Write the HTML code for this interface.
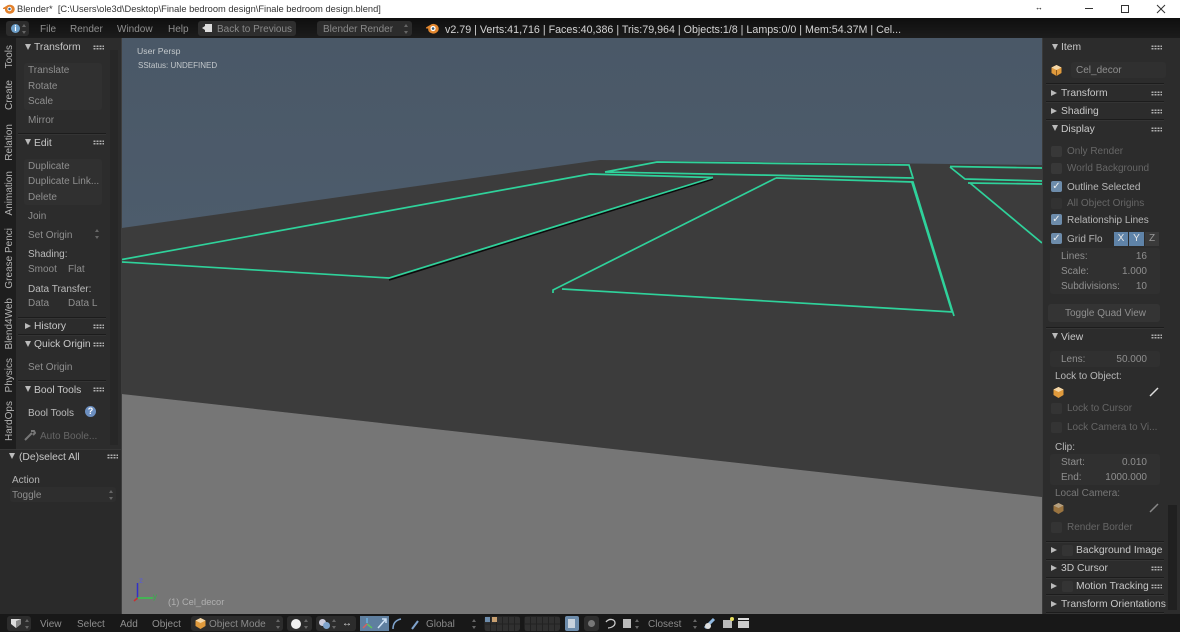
<!DOCTYPE html>
<html><head><meta charset="utf-8"><style>
html,body{margin:0;padding:0;background:#2b2b2b}
#r{position:relative;width:1180px;height:632px;overflow:hidden;font-family:"Liberation Sans","DejaVu Sans",sans-serif;font-size:10px;color:#a6a6a6;filter:blur(.35px)}
#r div{position:absolute}
.t{white-space:pre;line-height:12px;margin-top:1px}
.b{color:#cfcfcf}.h{color:#c8c8c8;font-size:10.3px}
.d{color:#666}.m{color:#8f8f8f}.mm{color:#8a8a8a}
.f{background:#343434;border-radius:3px}
.v{writing-mode:vertical-rl;transform:rotate(180deg);white-space:pre;line-height:12px;color:#b4b4b4;font-size:10px}
.g{width:11px;height:5px;background-image:radial-gradient(#b0b0b0 45%,transparent 50%);background-size:3px 2.5px}
.ad{width:0;height:0;border-left:3px solid transparent;border-right:3px solid transparent;border-top:6px solid #bbb}
.ar{width:0;height:0;border-top:3px solid transparent;border-bottom:3px solid transparent;border-left:6px solid #bbb}
.s{height:1px;background:#1c1c1c;box-shadow:0 1px 0 #343434}
.c{width:11px;height:11px;border-radius:2px;background:#383838}
.ck{width:11px;height:11px;border-radius:2px;background:#6d8cab;color:#eee;font-size:10px;line-height:11px;text-align:center}
.sp{width:5px;height:10px}
.sp:before,.sp:after{content:"";position:absolute;left:0;border-left:2.5px solid transparent;border-right:2.5px solid transparent}
.sp:before{top:0;border-bottom:3.500px solid #666}
.sp:after{bottom:0;border-top:3.500px solid #666}
.n{right:33px}
.grid{background-image:linear-gradient(90deg,#222 1px,transparent 1px),linear-gradient(#222 1px,transparent 1px);background-size:6px 7.500px}
svg{position:absolute}
</style></head><body><div id="r">

<div style="left:0;top:0;width:1180px;height:18px;background:#fff"></div>
<svg style="left:2px;top:3px" width="13" height="12" viewBox="0 0 13 12"><path d="M1 5L6 2a5 4.500 0 1 1-1 8A4 4 0 0 1 3 6L1 6z" fill="#e2812c"/><circle cx="7.500" cy="6" r="2.200" fill="#fff"/><circle cx="7.500" cy="6" r="1.200" fill="#2c5f94"/></svg>
<div class="t" style="left:17px;top:2px;font-size:9.300px;color:#333">Blender*  [C:\Users\ole3d\Desktop\Finale bedroom design\Finale bedroom design.blend]</div>
<div class="t" style="left:1035px;top:1px;color:#111;font-size:8px;font-weight:bold">↔</div>
<div style="left:1085px;top:8px;width:8px;height:1px;background:#333"></div>
<div style="left:1121px;top:5px;width:6px;height:6px;border:1px solid #333"></div>
<svg style="left:1156px;top:4px" width="10" height="10"><path d="M1 1L9 9M9 1L1 9" stroke="#333" stroke-width="1"/></svg>

<div style="left:0;top:18px;width:1180px;height:20px;background:linear-gradient(#0f0f0f,#1c1c1c)"></div>
<div class="f" style="left:6px;top:21px;width:23px;height:15px;background:#2c2c2c"></div>
<div style="left:11px;top:24px;width:9px;height:9px;border-radius:50%;background:#6d9fc9;color:#fff;font-size:8px;line-height:9px;text-align:center;font-weight:bold">i</div>
<div class="sp" style="left:22px;top:24px"></div>
<div class="t m" style="left:40px;top:23px">File</div>
<div class="t m" style="left:70px;top:23px">Render</div>
<div class="t m" style="left:117px;top:23px">Window</div>
<div class="t m" style="left:168px;top:23px">Help</div>
<div class="f" style="left:198px;top:21px;width:98px;height:15px;background:#2e2e2e"></div>
<svg style="left:201px;top:23px" width="12" height="11"><path d="M4 1H11V9H4V7L1 5L4 3z" fill="#ddd"/></svg>
<div class="t mm" style="left:217px;top:23px">Back to Previous</div>
<div class="f" style="left:317px;top:21px;width:95px;height:15px;background:#2c2c2c"></div>
<div class="t mm" style="left:323px;top:23px">Blender Render</div>
<div class="sp" style="left:404px;top:24px"></div>
<svg style="left:425px;top:22px" width="14" height="13" viewBox="0 0 13 12"><path d="M1 5L6 2a5 4.500 0 1 1-1 8A4 4 0 0 1 3 6L1 6z" fill="#e2872f"/><circle cx="7.500" cy="6" r="2.400" fill="#fff"/><circle cx="7.500" cy="6" r="1.200" fill="#33566f"/></svg>
<div class="t" style="left:445px;top:23px;color:#d4d4d4;font-size:10.700px">v2.79 | Verts:41,716 | Faces:40,386 | Tris:79,964 | Objects:1/8 | Lamps:0/0 | Mem:54.37M | Cel...</div>

<svg style="left:122px;top:38px" width="920" height="576" viewBox="122 38 920 576">
<defs><linearGradient id="sky" x1="0" y1="0" x2="0" y2="1"><stop offset="0" stop-color="#4a5867"/><stop offset="1" stop-color="#4d5c6c"/></linearGradient></defs>
<rect x="122" y="38" width="920" height="200" fill="url(#sky)"/>
<polygon points="122,228 600,160 1042,165 1042,497 122,394" fill="#3c3c3c"/>
<polygon points="122,394 1042,497 1042,614 122,614" fill="#767676"/>
<path d="M389,280L713,179" stroke="#0b0b0b" stroke-width="1.500" fill="none"/>
<g fill="none" stroke="#2fd29b" stroke-width="1.700">
<path d="M122,259.500L590,174L713,177.500"/>
<path d="M122,262L389,278L713,177.500"/>
<path d="M605,172L657,162L909,165L913,178L605,172"/>
<path d="M776,178L913,182L954,316"/>
<path d="M911.500,181L952,312"/>
<path d="M776,178L553,290L553,293"/>
<path d="M562,289L953,312"/>
<path d="M950,166.500L1042,168"/>
<path d="M950,167L965,179L1042,181"/>
<path d="M968,183L1042,184"/>
<path d="M970,183L1042,243"/>
</g>
<path d="M137.500,583V598" stroke="#3030c8" stroke-width="1.500"/>
<path d="M137.500,598H153" stroke="#35c84a" stroke-width="1.500"/>
<path d="M137.500,598L134,601" stroke="#c83030" stroke-width="1.500"/>
</svg>
<div class="t" style="left:139px;top:574px;font-size:8px;color:#5b5bd0">z</div>
<div class="t" style="left:153px;top:590px;font-size:8px;color:#35b04a">y</div>
<div class="t" style="left:168px;top:595px;font-size:9.300px;color:#b0b0b0">(1) Cel_decor</div>
<div class="t" style="left:137px;top:44px;font-size:8.700px;color:#c3c8cc">User Persp</div>
<div class="t" style="left:138px;top:59px;font-size:8px;color:#c3c8cc">SStatus: UNDEFINED</div>

<!-- left -->
<div style="left:0;top:38px;width:122px;height:576px;background:#2c2c2c"></div>
<div style="left:0;top:38px;width:16px;height:411px;background:#1e1e1e"></div>
<div class="v" style="left:4px;top:45px">Tools</div>
<div class="v" style="left:4px;top:80px">Create</div>
<div class="v" style="left:4px;top:124px">Relation</div>
<div class="v" style="left:4px;top:171px">Animation</div>
<div class="v" style="left:4px;top:228px">Grease Penci</div>
<div class="v" style="left:4px;top:298px">Blend4Web</div>
<div class="v" style="left:4px;top:358px">Physics</div>
<div class="v" style="left:4px;top:401px">HardOps</div>
<div style="left:110px;top:50px;width:8px;height:395px;background:#272727"></div>

<div class="ad" style="left:25px;top:44px"></div><div class="t h" style="left:34px;top:41px">Transform</div><div class="g" style="left:93px;top:45px"></div>
<div class="f" style="left:24px;top:63px;width:78px;height:47px;background:#303030"></div>
<div class="t m" style="left:28px;top:64px">Translate</div>
<div class="t m" style="left:28px;top:80px">Rotate</div>
<div class="t m" style="left:28px;top:95px">Scale</div>
<div class="t m" style="left:28px;top:114px">Mirror</div>
<div class="s" style="left:18px;top:133px;width:88px"></div>
<div class="ad" style="left:25px;top:139px"></div><div class="t h" style="left:34px;top:137px">Edit</div><div class="g" style="left:93px;top:140px"></div>
<div class="f" style="left:24px;top:159px;width:78px;height:46px;background:#303030"></div>
<div class="t m" style="left:28px;top:160px">Duplicate</div>
<div class="t m" style="left:28px;top:175px">Duplicate Link...</div>
<div class="t m" style="left:28px;top:191px">Delete</div>
<div class="t m" style="left:28px;top:210px">Join</div>
<div class="t m" style="left:28px;top:229px">Set Origin</div>
<div class="sp" style="left:95px;top:229px"></div>
<div class="t" style="left:28px;top:248px;color:#bbb">Shading:</div>
<div class="t m" style="left:28px;top:263px">Smoot</div><div class="t m" style="left:68px;top:263px">Flat</div>
<div class="t" style="left:28px;top:283px;color:#bbb">Data Transfer:</div>
<div class="t m" style="left:28px;top:297px">Data</div><div class="t m" style="left:68px;top:297px">Data L</div>
<div class="s" style="left:18px;top:317px;width:88px"></div>
<div class="ar" style="left:25px;top:323px"></div><div class="t h" style="left:34px;top:320px">History</div><div class="g" style="left:93px;top:324px"></div>
<div class="s" style="left:18px;top:334px;width:88px"></div>
<div class="ad" style="left:25px;top:341px"></div><div class="t h" style="left:34px;top:338px">Quick Origin</div><div class="g" style="left:93px;top:342px"></div>
<div class="t m" style="left:28px;top:361px">Set Origin</div>
<div class="s" style="left:18px;top:380px;width:88px"></div>
<div class="ad" style="left:25px;top:386px"></div><div class="t h" style="left:34px;top:384px">Bool Tools</div><div class="g" style="left:93px;top:387px"></div>
<div class="t" style="left:28px;top:407px;color:#bbb">Bool Tools</div>
<div style="left:85px;top:406px;width:11px;height:11px;border-radius:50%;background:#6c8fc0;color:#fff;font-size:9px;line-height:11px;text-align:center;font-weight:bold">?</div>
<svg style="left:24px;top:429px" width="12" height="12"><path d="M1 11L8 4M7 2l3 0l1 2l-2 2" stroke="#777" stroke-width="2" fill="none"/></svg>
<div class="t" style="left:40px;top:430px;color:#666">Auto Boole...</div>

<div style="left:0;top:449px;width:122px;height:165px;background:#2a2a2a;border-top:1px solid #363636"></div>
<div class="ad" style="left:9px;top:453px"></div><div class="t h" style="left:19px;top:451px">(De)select All</div><div class="g" style="left:107px;top:454px"></div>
<div class="t" style="left:12px;top:474px;color:#b5b5b5">Action</div>
<div class="f" style="left:10px;top:487px;width:106px;height:15px;background:#2e2e2e"></div>
<div class="t m" style="left:12px;top:489px">Toggle</div>
<div class="sp" style="left:109px;top:490px"></div>
<div style="left:121px;top:38px;width:1px;height:576px;background:#3d3d3d"></div>

<!-- right -->
<div style="left:1042px;top:38px;width:138px;height:576px;background:#2c2c2c"></div>
<div style="left:1168px;top:505px;width:9px;height:105px;background:#202020"></div>
<div class="ad" style="left:1052px;top:44px"></div><div class="t h" style="left:1061px;top:41px">Item</div><div class="g" style="left:1151px;top:45px"></div>
<svg style="left:1051px;top:65px" width="11" height="11"><path d="M5.500 0L10.500 2.500V8L5.500 11L.5 8V2.500z" fill="#e09a3c"/><path d="M5.500 5L10.500 2.500L5.500 0L.5 2.500z" fill="#f4d7a8"/><path d="M5.500 5V11" stroke="#8a5a20"/></svg>
<div class="f" style="left:1071px;top:62px;width:95px;height:16px;background:#303030"></div>
<div class="t m" style="left:1076px;top:64px">Cel_decor</div>
<div class="s" style="left:1046px;top:83px;width:118px"></div>
<div class="ar" style="left:1051px;top:90px"></div><div class="t h" style="left:1061px;top:87px">Transform</div><div class="g" style="left:1151px;top:91px"></div>
<div class="s" style="left:1046px;top:101px;width:118px"></div>
<div class="ar" style="left:1051px;top:108px"></div><div class="t h" style="left:1061px;top:105px">Shading</div><div class="g" style="left:1151px;top:109px"></div>
<div class="s" style="left:1046px;top:119px;width:118px"></div>
<div class="ad" style="left:1052px;top:125px"></div><div class="t h" style="left:1061px;top:123px">Display</div><div class="g" style="left:1151px;top:127px"></div>
<div class="c" style="left:1051px;top:146px"></div><div class="t d" style="left:1067px;top:145px">Only Render</div>
<div class="c" style="left:1051px;top:163px"></div><div class="t d" style="left:1067px;top:162px">World Background</div>
<div class="ck" style="left:1051px;top:181px">✓</div><div class="t" style="left:1067px;top:181px;color:#b8b8b8">Outline Selected</div>
<div class="c" style="left:1051px;top:198px;background:#323232"></div><div class="t d" style="left:1067px;top:197px">All Object Origins</div>
<div class="ck" style="left:1051px;top:214px">✓</div><div class="t" style="left:1067px;top:214px;color:#b8b8b8">Relationship Lines</div>
<div class="ck" style="left:1051px;top:233px">✓</div><div class="t" style="left:1067px;top:233px;color:#b8b8b8">Grid Flo</div>
<div style="left:1114px;top:232px;width:14px;height:14px;background:#5f83a8;color:#e6e6e6;text-align:center;line-height:14px">X</div>
<div style="left:1129px;top:232px;width:15px;height:14px;background:#5f83a8;color:#e6e6e6;text-align:center;line-height:14px">Y</div>
<div style="left:1145px;top:232px;width:14px;height:14px;background:#3a3a3a;color:#999;text-align:center;line-height:14px">Z</div>
<div class="f" style="left:1050px;top:248px;width:110px;height:46px;background:#303030"></div>
<div class="t m" style="left:1061px;top:250px">Lines:</div><div class="t m n" style="top:250px">16</div>
<div class="t m" style="left:1061px;top:265px">Scale:</div><div class="t m n" style="top:265px">1.000</div>
<div class="t m" style="left:1061px;top:280px">Subdivisions:</div><div class="t m n" style="top:280px">10</div>
<div class="f" style="left:1048px;top:304px;width:112px;height:18px;background:#343434"></div>
<div class="t m" style="left:1065px;top:307px">Toggle Quad View</div>
<div class="s" style="left:1046px;top:327px;width:118px"></div>
<div class="ad" style="left:1052px;top:333px"></div><div class="t h" style="left:1061px;top:331px">View</div><div class="g" style="left:1151px;top:334px"></div>
<div class="f" style="left:1050px;top:351px;width:110px;height:16px;background:#303030"></div>
<div class="t m" style="left:1061px;top:353px">Lens:</div><div class="t m n" style="top:353px">50.000</div>
<div class="t" style="left:1055px;top:370px;color:#b8b8b8">Lock to Object:</div>
<svg style="left:1053px;top:387px" width="11" height="11"><path d="M5.500 0L10.500 2.500V8L5.500 11L.5 8V2.500z" fill="#e09a3c"/><path d="M5.500 5L10.500 2.500L5.500 0L.5 2.500z" fill="#f4d7a8"/></svg>
<svg style="left:1149px;top:386px" width="10" height="12"><path d="M1 10L9 2" stroke="#ddd" stroke-width="1.500"/></svg>
<div class="c" style="left:1051px;top:403px;background:#343434"></div><div class="t d" style="left:1067px;top:402px">Lock to Cursor</div>
<div class="c" style="left:1051px;top:422px;background:#343434"></div><div class="t d" style="left:1067px;top:421px">Lock Camera to Vi...</div>
<div class="t" style="left:1055px;top:441px;color:#b8b8b8">Clip:</div>
<div class="f" style="left:1050px;top:454px;width:110px;height:31px;background:#303030"></div>
<div class="t m" style="left:1061px;top:456px">Start:</div><div class="t m n" style="top:456px">0.010</div>
<div class="t m" style="left:1061px;top:471px">End:</div><div class="t m n" style="top:471px">1000.000</div>
<div class="t" style="left:1055px;top:487px;color:#777">Local Camera:</div>
<svg style="left:1053px;top:503px" width="11" height="11"><path d="M5.500 0L10.500 2.500V8L5.500 11L.5 8V2.500z" fill="#9a7440"/><path d="M5.500 5L10.500 2.500L5.500 0L.5 2.500z" fill="#b5a080"/></svg>
<svg style="left:1149px;top:502px" width="10" height="12"><path d="M1 10L9 2" stroke="#888" stroke-width="1.500"/></svg>
<div class="c" style="left:1051px;top:522px;background:#343434"></div><div class="t d" style="left:1067px;top:521px">Render Border</div>
<div class="s" style="left:1046px;top:541px;width:118px"></div>
<div class="ar" style="left:1051px;top:547px"></div><div class="c" style="left:1062px;top:545px;background:#343434"></div><div class="t h" style="left:1076px;top:544px">Background Image</div>
<div class="s" style="left:1046px;top:559px;width:118px"></div>
<div class="ar" style="left:1051px;top:565px"></div><div class="t h" style="left:1061px;top:562px">3D Cursor</div><div class="g" style="left:1151px;top:566px"></div>
<div class="s" style="left:1046px;top:577px;width:118px"></div>
<div class="ar" style="left:1051px;top:583px"></div><div class="c" style="left:1062px;top:581px;background:#343434"></div><div class="t h" style="left:1076px;top:580px">Motion Tracking</div><div class="g" style="left:1151px;top:584px"></div>
<div class="s" style="left:1046px;top:594px;width:118px"></div>
<div class="ar" style="left:1051px;top:601px"></div><div class="t h" style="left:1061px;top:598px">Transform Orientations</div>
<div class="s" style="left:1046px;top:612px;width:118px"></div>
<div style="left:1042px;top:38px;width:1px;height:576px;background:#3a3a3a"></div>

<!-- bottom -->
<div style="left:0;top:614px;width:1180px;height:18px;background:#181818"></div>
<div class="f" style="left:7px;top:616px;width:24px;height:15px;background:#2c2c2c"></div>
<svg style="left:10px;top:618px" width="12" height="11"><path d="M1 1H11V6L6 10L1 6z" fill="#ddd"/><path d="M6 3V10L11 6V1z" fill="#888"/></svg>
<div class="sp" style="left:25px;top:619px"></div>
<div class="t m" style="left:40px;top:618px">View</div>
<div class="t m" style="left:77px;top:618px">Select</div>
<div class="t m" style="left:120px;top:618px">Add</div>
<div class="t m" style="left:152px;top:618px">Object</div>
<div class="f" style="left:191px;top:616px;width:92px;height:15px;background:#2c2c2c"></div>
<svg style="left:195px;top:618px" width="11" height="11"><path d="M5.500 0L10.500 2.500V8L5.500 11L.5 8V2.500z" fill="#e09a3c"/><path d="M5.500 5L10.500 2.500L5.500 0L.5 2.500z" fill="#f4d7a8"/></svg>
<div class="t mm" style="left:209px;top:618px">Object Mode</div>
<div class="sp" style="left:276px;top:619px"></div>
<div class="f" style="left:287px;top:616px;width:25px;height:15px;background:#2c2c2c"></div>
<div style="left:291px;top:619px;width:10px;height:10px;border-radius:50%;background:#eee"></div>
<div class="sp" style="left:304px;top:619px"></div>
<div class="f" style="left:316px;top:616px;width:40px;height:15px;background:#2c2c2c"></div>
<div style="left:319px;top:619px;width:7px;height:7px;border-radius:50%;background:#ccd"></div>
<div style="left:323px;top:622px;width:7px;height:7px;border-radius:50%;background:#7fa3cc"></div>
<div class="sp" style="left:332px;top:619px"></div>
<div class="t" style="left:342px;top:617px;color:#ddd;font-size:10px">↔</div>
<div style="left:360px;top:616px;width:15px;height:15px;background:#5f7f9f"></div>
<div style="left:375px;top:616px;width:14px;height:15px;background:#5f7f9f"></div>
<svg style="left:360px;top:616px" width="60" height="15"><path d="M7 7V2" stroke="#6bb0e0" stroke-width="1.500"/><path d="M7 8L12 12" stroke="#5fc45f" stroke-width="1.500"/><path d="M7 8L3 12" stroke="#d86060" stroke-width="1.500"/><path d="M18 12L26 3M22 3h4v4" stroke="#cfe2f5" stroke-width="1.500" fill="none"/><path d="M33 13C33 7 36 4 41 3" stroke="#7fa3cc" stroke-width="1.500" fill="none"/><path d="M52 13L58 5" stroke="#7fa3cc" stroke-width="2"/></svg>
<div class="t mm" style="left:426px;top:618px">Global</div>
<div class="sp" style="left:472px;top:619px"></div>
<div class="f grid" style="left:484px;top:616px;width:36px;height:15px;background-color:#303030"></div>
<div style="left:485px;top:617px;width:5px;height:5px;background:#6d8cab"></div><div style="left:492px;top:617px;width:5px;height:5px;background:#c9a070"></div>
<div class="f grid" style="left:524px;top:616px;width:36px;height:15px;background-color:#303030"></div>
<div style="left:565px;top:616px;width:14px;height:15px;background:#6d8cab;border-radius:2px"></div>
<div style="left:568px;top:619px;width:7px;height:9px;background:#c9d3dd"></div>
<div class="f" style="left:584px;top:616px;width:15px;height:15px;background:#2e2e2e"></div>
<div style="left:588px;top:620px;width:7px;height:7px;border-radius:50%;background:#777"></div>
<svg style="left:604px;top:618px" width="14" height="12"><path d="M2 4C5 0 11 1 11 5C11 8 7 10 4 10" stroke="#ccc" stroke-width="1.300" fill="none"/></svg>
<div style="left:623px;top:619px;width:8px;height:9px;background:#bbb"></div>
<div class="sp" style="left:635px;top:619px"></div>
<div class="t mm" style="left:648px;top:618px">Closest</div>
<div class="sp" style="left:693px;top:619px"></div>
<svg style="left:703px;top:616px" width="14" height="15"><path d="M2 12L11 3" stroke="#8fb8e0" stroke-width="3"/><circle cx="5" cy="10" r="3" fill="#ddd"/></svg>
<div style="left:723px;top:620px;width:9px;height:8px;background:#bbb"></div>
<div style="left:730px;top:617px;width:4px;height:4px;border-radius:50%;background:#e8e060"></div>
<div style="left:738px;top:621px;width:11px;height:7px;background:#ccc"></div>
<div style="left:738px;top:618px;width:11px;height:2px;background:#ddd"></div>

</div></body></html>
